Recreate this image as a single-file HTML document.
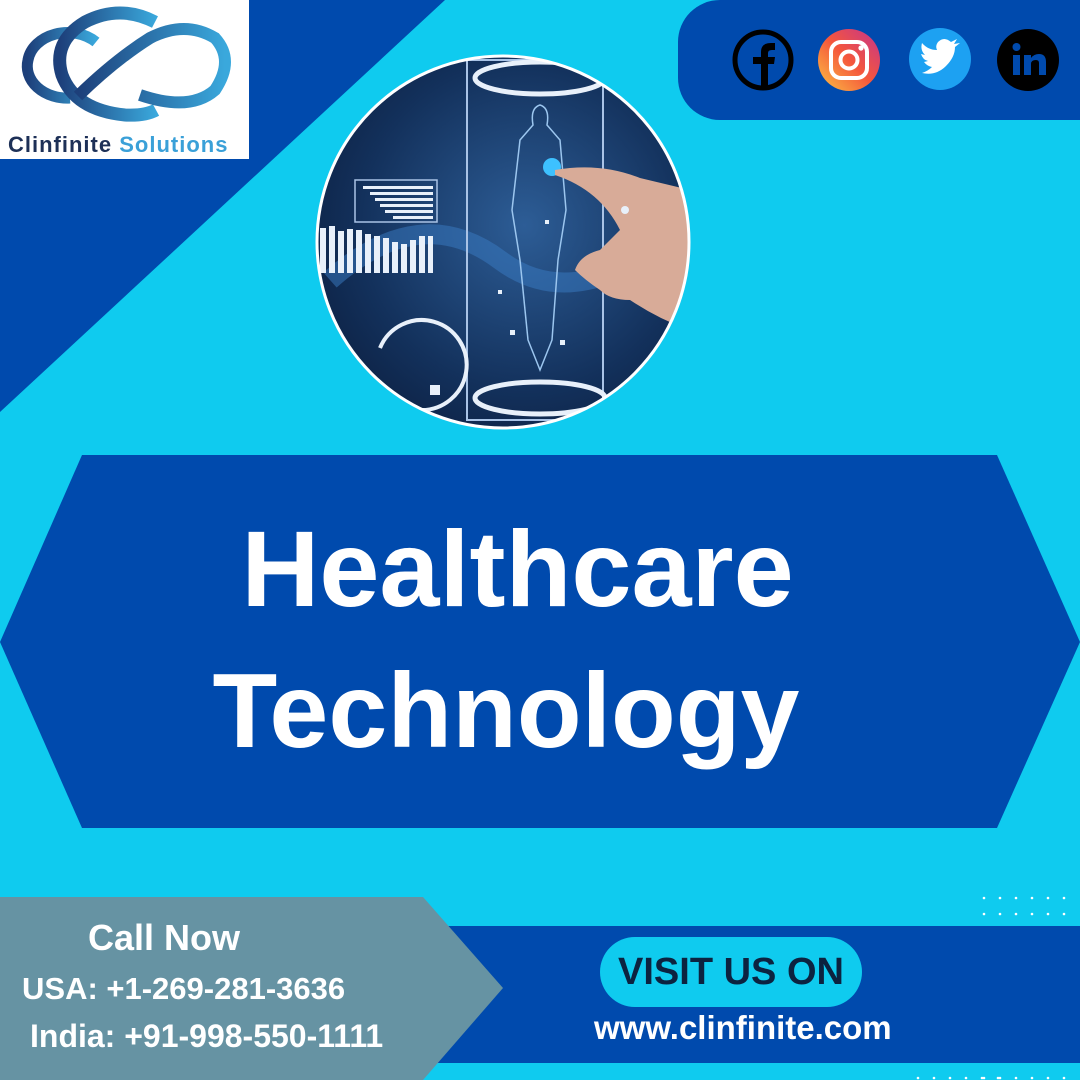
<!DOCTYPE html>
<html><head><meta charset="utf-8"><style>
*{margin:0;padding:0;box-sizing:border-box}
body{width:1080px;height:1080px;overflow:hidden;background:#0fcbef;position:relative;font-family:"Liberation Sans",sans-serif}
.abs{position:absolute}
.n{font-family:"Liberation Sans Narrow","Liberation Sans",sans-serif;font-weight:bold}
</style></head><body>
<svg class="abs" style="left:0;top:0" width="1080" height="1080" viewBox="0 0 1080 1080">
<polygon points="0,0 445,0 0,412" fill="#004aad"/>
<path d="M720,0 H1080 V120 H720 A42,42 0 0 1 678,78 V42 A42,42 0 0 1 720,0Z" fill="#004aad"/>
<polygon points="82,455 997,455 1080,642 997,828 82,828 0,642" fill="#004aad"/>
<rect x="420" y="926" width="660" height="137" fill="#004aad"/>
<polygon points="0,897 423,897 503,988 423,1080 0,1080" fill="#6693a3"/>
<g fill="#fff">
<g id="d"><circle cx="984" cy="898" r="1.3"/><circle cx="1000" cy="898" r="1.3"/><circle cx="1016" cy="898" r="1.3"/><circle cx="1032" cy="898" r="1.3"/><circle cx="1048" cy="898" r="1.3"/><circle cx="1064" cy="898" r="1.3"/></g>
<use href="#d" y="16"/><use href="#d" y="180" x="-66"/><use href="#d" y="180"/>
</g>
<!-- social -->
<circle cx="763" cy="60" r="28" fill="none" stroke="#000" stroke-width="5"/>
<path d="M761,89 V64 H753 V57 H761 V52 Q761,43 771,43 H775 V50 H772 Q768,50 768,53 V57 H775 L774,64 H768 V89Z" fill="#000"/>
<defs><linearGradient id="ig" x1="0" y1="1" x2="1" y2="0"><stop offset="0" stop-color="#fcc443"/><stop offset=".5" stop-color="#f5573c"/><stop offset="1" stop-color="#c4338e"/></linearGradient></defs>
<circle cx="849" cy="60" r="31" fill="url(#ig)"/>
<rect x="831" y="42" width="36" height="36" rx="10" fill="none" stroke="#fff" stroke-width="4"/>
<circle cx="849" cy="60" r="8.5" fill="none" stroke="#fff" stroke-width="4"/>
<circle cx="861" cy="48" r="2.6" fill="#fff"/>
<circle cx="940" cy="59" r="31" fill="#1da1f2"/>
<path d="M922,73 Q936,76 946,66 Q955,57 955,47 L960,43 L954,44 L957,39 L951,42 Q944,36 938,42 Q935,46 937,50 Q928,50 922,43 Q920,50 925,55 L921,54 Q923,60 928,61 L924,62 Q927,66 932,67 Q928,71 922,73Z" fill="#fff"/>
<circle cx="1028" cy="60" r="31" fill="#000"/>
<g fill="#004aad"><rect x="1013" y="55" width="7" height="20"/><circle cx="1016.5" cy="47" r="4"/><path d="M1024,55 H1031 V58 Q1034,54 1039,54 Q1046,54 1046,62 V75 H1039 V63 Q1039,60 1036,60 Q1031,60 1031,64 V75 H1024Z"/></g>
<!-- circle image -->
<defs><clipPath id="c"><circle cx="503" cy="242" r="185"/></clipPath>
<radialGradient id="bg" cx=".55" cy=".45" r=".7"><stop offset="0" stop-color="#2d5d96"/><stop offset=".6" stop-color="#13315c"/><stop offset="1" stop-color="#0a1a38"/></radialGradient></defs>
<g clip-path="url(#c)">
<rect x="310" y="50" width="390" height="390" fill="url(#bg)"/>
<path d="M330,280 Q420,200 500,260 T690,220" stroke="#3a7cc4" stroke-width="20" fill="none" opacity=".5"/>
<g fill="#e8f0fa"><rect x="320" y="228" width="6" height="45"/><rect x="329" y="226" width="6" height="47"/><rect x="338" y="231" width="6" height="42"/><rect x="347" y="229" width="6" height="44"/><rect x="356" y="230" width="6" height="43"/><rect x="365" y="234" width="6" height="39"/><rect x="374" y="236" width="6" height="37"/><rect x="383" y="238" width="6" height="35"/><rect x="392" y="242" width="6" height="31"/><rect x="401" y="244" width="6" height="29"/><rect x="410" y="240" width="6" height="33"/><rect x="419" y="236" width="6" height="37"/><rect x="428" y="236" width="5" height="37"/>
<rect x="363" y="186" width="70" height="3"/><rect x="370" y="192" width="63" height="3"/><rect x="375" y="198" width="58" height="3"/><rect x="380" y="204" width="53" height="3"/><rect x="385" y="210" width="48" height="3"/><rect x="393" y="216" width="40" height="3"/></g>
<rect x="355" y="180" width="82" height="42" fill="none" stroke="#a9c3e6" stroke-width="1.5"/>
<rect x="467" y="60" width="136" height="360" fill="none" stroke="#a9c3e6" stroke-width="2"/>
<ellipse cx="540" cy="78" rx="65" ry="16" fill="none" stroke="#e8f0fa" stroke-width="5"/>
<ellipse cx="540" cy="398" rx="65" ry="16" fill="none" stroke="#e8f0fa" stroke-width="5"/>
<path d="M540,105 Q530,108 533,125 L520,140 L512,210 L520,260 L528,340 L540,370 L552,340 L558,260 L566,210 L560,140 L547,125 Q550,108 540,105Z" fill="none" stroke="#9cc6ef" stroke-width="1.5"/>
<circle cx="552" cy="167" r="9" fill="#3dc1ff"/>
<path d="M555,170 Q600,162 640,178 L690,190 L690,330 Q660,320 630,300 Q610,300 600,290 Q585,280 575,270 Q580,255 600,250 L620,230 Q600,190 555,175Z" fill="#d8ab98"/>
<path d="M380,348 A45,45 0 1 1 420,410" fill="none" stroke="#e8f0fa" stroke-width="4"/>
<g fill="#e8f0fa"><rect x="545" y="220" width="4" height="4"/><rect x="498" y="290" width="4" height="4"/><rect x="510" y="330" width="5" height="5"/><rect x="560" y="340" width="5" height="5"/><rect x="430" y="385" width="10" height="10"/><circle cx="625" cy="210" r="4"/></g>
</g>
<circle cx="503" cy="242" r="186" fill="none" stroke="#fff" stroke-width="3"/>
</svg>
<!-- logo -->
<div class="abs" style="left:0;top:0;width:249px;height:159px;background:#fff">
<svg class="abs" style="left:0;top:0" width="249" height="130" viewBox="0 0 249 130">
<defs><linearGradient id="lg" x1="0" x2="1"><stop offset="0" stop-color="#1d3f7a"/><stop offset="1" stop-color="#3aa8dc"/></linearGradient></defs>
<g fill="none" stroke="url(#lg)" stroke-linecap="butt">
<path d="M96,42 A40,32 0 0 0 28,60 A40,32 0 0 0 70,98" stroke-width="11"/>
<path d="M155,22 Q120,4 85,22 Q52,42 62,75 Q75,110 125,115 Q145,116 156,110" stroke-width="13"/>
<path d="M78,96 Q115,60 150,38 Q185,20 215,38 Q235,60 215,90 Q190,112 140,95" stroke-width="12"/>
</g>
</svg>
<div class="abs" style="left:8px;top:132px;font-size:22px;font-weight:bold;letter-spacing:1px;white-space:nowrap"><span style="color:#1d3057">Clinfinite</span> <span style="color:#3aa0d8">Solutions</span></div>
</div>
<!-- headline -->
<div class="abs" style="left:0;width:1035px;top:515px;text-align:center;color:#fff;font-weight:bold;font-size:108px;line-height:108px">Healthcare</div>
<div class="abs" style="left:0;width:1012px;top:657px;text-align:center;color:#fff;font-weight:bold;font-size:106px;line-height:108px">Technology</div>
<!-- bottom -->
<div class="abs n" style="left:88px;top:917px;color:#fff;font-size:36px">Call Now</div>
<div class="abs n" style="left:22px;top:971px;color:#fff;font-size:31px">USA: +1-269-281-3636</div>
<div class="abs n" style="left:30px;top:1018px;color:#fff;font-size:32px">India: +91-998-550-1111</div>
<div class="abs n" style="left:600px;top:937px;width:262px;height:70px;border-radius:35px;background:#0fcbef;color:#0c2340;font-size:38px;line-height:70px;text-align:center">VISIT US ON</div>
<div class="abs n" style="left:594px;top:1009px;color:#fff;font-size:33px">www.clinfinite.com</div>
</body></html>
